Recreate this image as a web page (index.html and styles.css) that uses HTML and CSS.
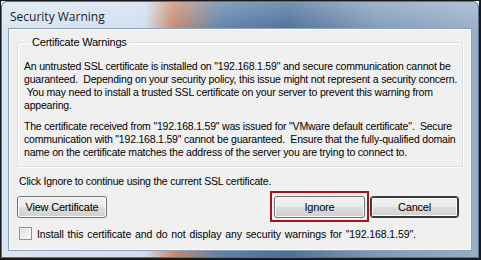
FILE: index.html
```html
<!DOCTYPE html>
<html>
<head>
<meta charset="utf-8">
<link rel="stylesheet" href="styles.css">
</head>
<body>
<div class="screen">
  <div class="window">
    <div class="titlebar">Security Warning</div>
    <div class="client">
      <fieldset class="group">
        <legend class="legend">Certificate Warnings</legend>
        <p class="para">An untrusted SSL certificate is installed on "192.168.1.59" and secure communication cannot be<br>guaranteed.&nbsp; Depending on your security policy, this issue might not represent a security concern.<br>&nbsp;You may need to install a trusted SSL certificate on your server to prevent this warning from<br>appearing.</p>
        <p class="para last">The certificate received from "192.168.1.59" was issued for "VMware default certificate".&nbsp; Secure<br>communication with "192.168.1.59" cannot be guaranteed.&nbsp; Ensure that the fully-qualified domain<br>name on the certificate matches the address of the server you are trying to connect to.</p>
      </fieldset>
      <p class="hint">Click Ignore to continue using the current SSL certificate.</p>
      <div class="buttons">
        <button class="btn view">View Certificate</button>
        <div class="spacer"></div>
        <div class="highlight"><button class="btn ignore">Ignore</button></div>
        <button class="btn cancel">Cancel</button>
      </div>
      <label class="check">
        <span class="box"></span>
        <span class="checktext">Install this certificate and do not display any security warnings for "192.168.1.59".</span>
      </label>
    </div>
  </div>
</div>
</body>
</html>
```
FILE: styles.css
```css
html, body {
  margin: 0;
  padding: 0;
  background: #ffffff;
}
.screen {
  width: 481px;
  height: 260px;
  box-sizing: border-box;
  border: 1px solid #1a1a1a;
  border-width: 1px 2px 2px 1px;
  background: #ffffff;
  display: flex;
}
.window {
  flex: 1;
  display: flex;
  flex-direction: column;
  border-radius: 6px 6px 0 0;
  border: 1px solid #5b6f86;
  padding: 0 7px 7px 7px;
  background:
    linear-gradient(to bottom, rgba(255,255,255,0.25) 0, rgba(255,255,255,0) 30px),
    linear-gradient(to right, #d9e6f2 0, #cfdff0 30%, #c98a6a 36%, #5d82ab 46%, #4b6f97 60%, #7f9ab9 78%, #97aec8 100%);
}
.titlebar {
  height: 27px;
  box-sizing: border-box;
  padding: 6px 0 0 1px;
  font-family: "Open Sans", "Noto Sans", sans-serif;
  font-size: 12px;
  color: #1e1e1e;
}
.client {
  flex: 1;
  background: #f0f0f0;
  border: 1px solid #fbfbfb;
  outline: 1px solid #8ea0b5;
  display: flex;
  flex-direction: column;
  padding: 6px 7px 0 7px;
  font-family: "Liberation Sans", Arial, sans-serif;
  font-size: 10.5px;
  letter-spacing: -0.2px;
  color: #000;
}
.group {
  margin: 0;
  padding: 12px 4px 7px 6px;
  border: 1px solid #d5dfe5;
  box-shadow: inset 1px 1px 0 #ffffff, 1px 1px 0 #ffffff;
  border-radius: 2px;
  box-sizing: border-box;
}
.legend {
  padding: 0 2px;
  margin-left: 6px;
  font-size: 11px;
  letter-spacing: -0.2px;
}
.para {
  margin: 0 0 8px 0;
  line-height: 13px;
  white-space: nowrap;
}
.para.last {
  margin-bottom: 0;
}
.hint {
  margin: 8px 0 0 2px;
  line-height: 13px;
}
.buttons {
  display: flex;
  align-items: center;
  margin-top: 3px;
}
.btn {
  font-family: "Liberation Sans", Arial, sans-serif;
  font-size: 11px;
  letter-spacing: -0.2px;
  color: #000;
  height: 22px;
  border: 1px solid #707070;
  border-radius: 3px;
  background: linear-gradient(to bottom, #f2f2f2 0, #ebebeb 50%, #dddddd 50%, #cfcfcf 100%);
  box-shadow: inset 0 0 0 1px #fcfcfc;
  padding: 0;
}
.view {
  width: 90px;
}
.spacer {
  flex: 1;
}
.highlight {
  border: 2px solid #a3151c;
  padding: 3px 2px 2px 2px;
  display: flex;
}
.ignore {
  width: 91px;
}
.cancel {
  width: 89px;
  margin-left: 1px;
  margin-right: 4px;
  border: 1px solid #3c3c3c;
  box-shadow: inset 0 0 0 1px #3c3c3c, inset 0 0 0 2px #fcfcfc;
}
.check {
  display: flex;
  align-items: center;
  margin-top: 5px;
  margin-left: 2px;
}
.box {
  width: 11px;
  height: 11px;
  border: 1px solid #8f8f8f;
  background: linear-gradient(135deg, #dcdcdc, #fbfbfb);
  box-shadow: inset 0 0 0 1px #f4f4f4;
  flex: none;
}
.checktext {
  margin-left: 5px;
  letter-spacing: -0.1px;
  word-spacing: 1px;
}
```
